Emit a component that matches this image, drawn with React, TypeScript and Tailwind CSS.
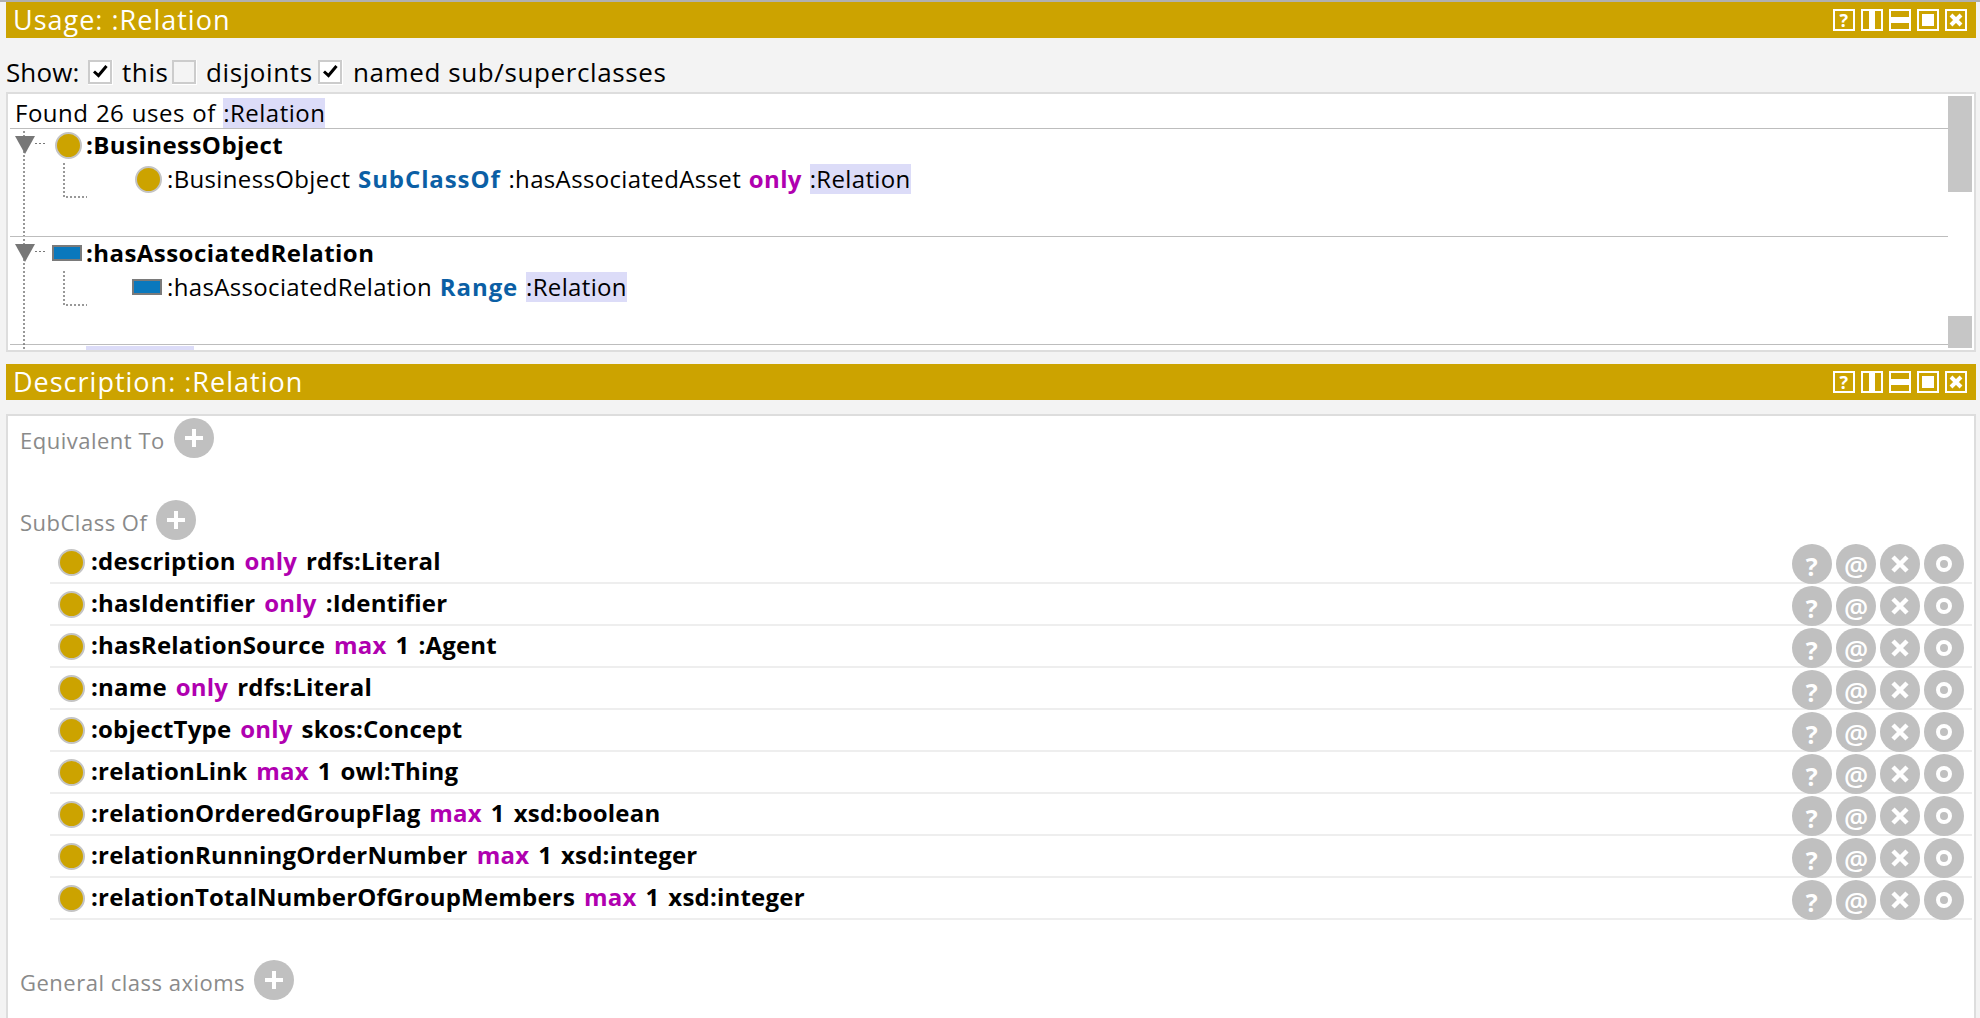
import { ReactNode } from "react";

const GOLD = "bg-[#cca300]";

const HeaderButton = ({ children }: { children?: ReactNode }) => (
  <div className="w-[22px] h-[22px] border-2 border-white flex items-center justify-center">
    {children}
  </div>
);

const ViewHeader = ({ title }: { title: string }) => (
  <div className={`h-[36px] ${GOLD} flex items-center justify-between pl-[7px] pr-[9px]`}>
    <span className="text-[27px] leading-[36px] tracking-[1px] text-white">{title}</span>
    <div className="flex gap-[6px]">
      <HeaderButton>
        <span className="text-[18px] leading-[18px] font-bold text-white">?</span>
      </HeaderButton>
      <HeaderButton>
        <div className="w-[6px] h-full bg-white" />
      </HeaderButton>
      <HeaderButton>
        <div className="h-[6px] w-full bg-white" />
      </HeaderButton>
      <HeaderButton>
        <div className="w-[12px] h-[12px] bg-white" />
      </HeaderButton>
      <HeaderButton>
        <svg width="14" height="14" viewBox="0 0 14 14">
          <path d="M2 2L12 12M12 2L2 12" stroke="white" strokeWidth="4" />
        </svg>
      </HeaderButton>
    </div>
  </div>
);

const Checkbox = ({ checked }: { checked?: boolean }) => (
  <div className="w-[25px] h-[25px] bg-white flex items-start justify-start">
    <div className={`w-[24px] h-[24px] border-2 border-[#cccccc] flex items-center justify-center ${checked ? "bg-white" : "bg-[#f4f4f4]"}`}>
      {checked && (
        <svg width="15" height="13" viewBox="0 0 15 13">
          <path d="M1 6.5L5.5 10.5L13.5 1" stroke="black" strokeWidth="3" fill="none" />
        </svg>
      )}
    </div>
  </div>
);

const Mark = ({ children }: { children: ReactNode }) => (
  <span className="inline-block h-[30px] leading-[30px] bg-[#dcdcf8]">{children}</span>
);

const Key = ({ children }: { children: ReactNode }) => (
  <span className="font-bold tracking-[0.9px] text-[#0b5fa5]">{children}</span>
);

const ClassDot = () => <div className="w-[27px] h-[27px] rounded-full border-2 border-[#c4c4c4] bg-[#cca300] shrink-0" />;

const PropBar = () => <div className="w-[30px] h-[16px] border-2 border-[#7a7a7a] bg-[#0a78bd] shrink-0" />;

const UsageRow = ({ icon, title, children }: { icon: ReactNode; title: ReactNode; children?: ReactNode }) => (
  <div className="relative h-[108px] border-t border-[#bdbdbd] pt-[1px]">
    <svg className="absolute left-[5px] top-[5px]" width="20" height="20" viewBox="0 0 20 20">
      <path d="M0 2H20L10 20Z" fill="#777" />
    </svg>
    <svg className="absolute left-[25px] top-[14px]" width="12" height="1">
      <line x1="0" y1="0.5" x2="12" y2="0.5" stroke="#777" strokeDasharray="2 2" />
    </svg>
    <div className="flex items-center h-[30px]">
      <div className="w-[76px] flex justify-end pr-[4px] shrink-0">{icon}</div>
      <span className="font-bold tracking-[0.45px] leading-[30px]">{title}</span>
    </div>
    {children && (
      <>
        <svg className="absolute left-[53px] top-[34px]" width="24" height="36">
          <path d="M1 0V34H24" stroke="#777" fill="none" strokeDasharray="2 2" strokeWidth="1.5" />
        </svg>
        <div className="flex items-center h-[30px] mt-[4px]">
          <div className="w-[157px] flex justify-end pr-[5px] shrink-0">{icon}</div>
          <span className="whitespace-nowrap leading-[30px] tracking-[0.35px] [word-spacing:1.2px]">{children}</span>
        </div>
      </>
    )}
  </div>
);

const SectionLabel = ({ label }: { label: string }) => (
  <div className="h-[40px] flex gap-[9px] pl-[12px]">
    <span className="text-[22px] leading-[28px] mt-[8px] tracking-[0.5px] text-[#8a8a8a] whitespace-nowrap">{label}</span>
    <div className="w-[40px] h-[40px] rounded-full bg-[#c0c0c0] flex items-center justify-center">
      <svg width="20" height="20" viewBox="0 0 20 20">
        <path d="M10 1V19M1 10H19" stroke="white" strokeWidth="4" />
      </svg>
    </div>
  </div>
);

const RoundButton = ({ children }: { children: ReactNode }) => (
  <div className="w-[40px] h-[40px] rounded-full bg-[#c0c0c0] flex items-center justify-center text-white">{children}</div>
);

const axioms: [string, string, string][] = [
  [":description", "only", "rdfs:Literal"],
  [":hasIdentifier", "only", ":Identifier"],
  [":hasRelationSource", "max", "1 :Agent"],
  [":name", "only", "rdfs:Literal"],
  [":objectType", "only", "skos:Concept"],
  [":relationLink", "max", "1 owl:Thing"],
  [":relationOrderedGroupFlag", "max", "1 xsd:boolean"],
  [":relationRunningOrderNumber", "max", "1 xsd:integer"],
  [":relationTotalNumberOfGroupMembers", "max", "1 xsd:integer"],
];

const AxiomRow = ({ axiom }: { axiom: [string, string, string] }) => (
  <div className="h-[42px] ml-[42px] mr-[2px] border-b-2 border-[#eeeeee] flex items-start justify-between pl-[8px] pr-[8px]">
    <div className="flex items-center h-[40px] gap-[6px]">
      <ClassDot />
      <span className="font-bold tracking-[0.2px] [word-spacing:2.5px] whitespace-nowrap leading-[30px] mb-[2px]">
        {axiom[0]} <span className="text-[#b000b0]">{axiom[1]}</span> {axiom[2]}
      </span>
    </div>
    <div className="flex gap-[4px] pt-[2px]">
      <RoundButton>
        <span className="text-[25px] font-bold leading-none mt-[4px]">?</span>
      </RoundButton>
      <RoundButton>
        <span className="text-[27px] tracking-normal font-semibold leading-none mt-[3px]">@</span>
      </RoundButton>
      <RoundButton>
        <svg width="20" height="20" viewBox="0 0 20 20">
          <path d="M3 3L17 17M17 3L3 17" stroke="white" strokeWidth="4.5" />
        </svg>
      </RoundButton>
      <RoundButton>
        <div className="w-[16px] h-[16px] rounded-full border-[4px] border-white" />
      </RoundButton>
    </div>
  </div>
);

export default function App() {
  return (
    <div className="h-[1018px] overflow-hidden bg-[#f3f3f3] border-t-2 border-[#b0b0b0] pl-[6px] pr-[4px] font-['Open_Sans',sans-serif] text-[24px] tracking-[0.5px] text-black">
      <ViewHeader title="Usage: :Relation" />

      <div className="h-[54px] flex items-center text-[26px] tracking-[0.6px] pt-[14px]">
        <span className="w-[82px] tracking-[0.1px]">Show:</span>
        <Checkbox checked />
        <span className="ml-[9px] w-[50px]">this</span>
        <Checkbox />
        <span className="ml-[9px] w-[112px]">disjoints</span>
        <Checkbox checked />
        <span className="ml-[10px] whitespace-nowrap">named sub/superclasses</span>
      </div>

      <div className="h-[260px] border-2 border-[#dddddd] bg-white flex">
        <div className="relative flex-1 overflow-hidden pl-[2px] min-w-0">
          <svg className="absolute left-[15px] top-[37px]" width="2" height="220">
            <line x1="1" y1="0" x2="1" y2="220" stroke="#777" strokeWidth="1.5" strokeDasharray="2 2" />
          </svg>
          <div className="h-[34px] pt-[4px] pl-[5px] leading-[30px] [word-spacing:0.7px]">
            Found 26 uses of <Mark>:Relation</Mark>
          </div>
          <UsageRow icon={<ClassDot />} title=":BusinessObject">
            :BusinessObject <Key>SubClassOf</Key> :hasAssociatedAsset <span className="font-bold text-[#b000b0]">only</span>{" "}
            <Mark>:Relation</Mark>
          </UsageRow>
          <UsageRow icon={<PropBar />} title=":hasAssociatedRelation">
            :hasAssociatedRelation <Key>Range</Key> <Mark>:Relation</Mark>
          </UsageRow>
          <div className="border-t border-[#bdbdbd] pt-[1px] pl-[76px]">
            <span className="inline-block h-[30px] w-[108px] bg-[#dcdcf8]" />
          </div>
        </div>
        <div className="w-[26px] shrink-0 flex flex-col justify-between pt-[2px] pb-[2px] pr-[2px]">
          <div className="h-[96px] bg-[#c6c6c6]" />
          <div className="h-[32px] bg-[#c6c6c6]" />
        </div>
      </div>

      <div className="h-[12px]" />
      <ViewHeader title="Description: :Relation" />
      <div className="h-[14px]" />

      <div className="h-[700px] border-2 border-b-0 border-[#dddddd] bg-white pt-[2px]">
        <SectionLabel label="Equivalent To" />
        <div className="h-[42px]" />
        <SectionLabel label="SubClass Of" />
        <div className="mt-[2px]">
          {axioms.map((a) => (
            <AxiomRow key={a[0]} axiom={a} />
          ))}
        </div>
        <div className="h-[40px]" />
        <SectionLabel label="General class axioms" />
      </div>
    </div>
  );
}
